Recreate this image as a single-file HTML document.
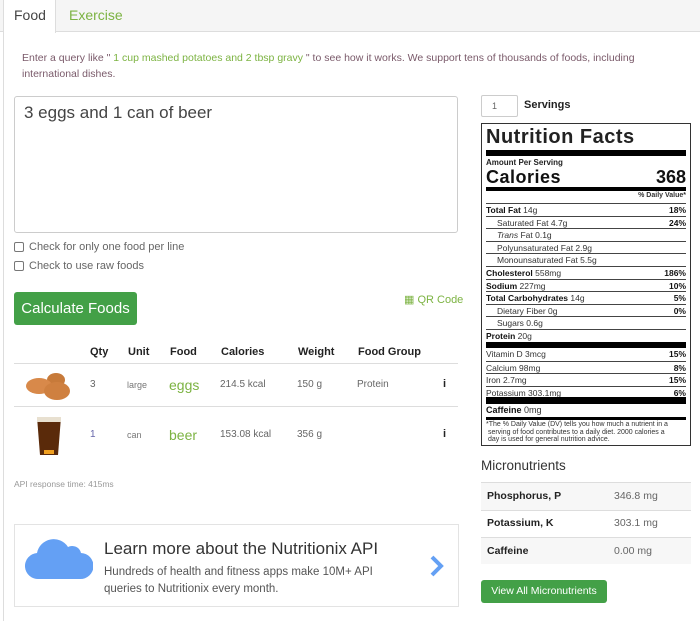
<!DOCTYPE html>
<html><head><meta charset="utf-8"><style>
*{box-sizing:border-box;margin:0;padding:0}
body{width:700px;height:621px;background:#fff;font-family:"Liberation Sans",sans-serif;color:#555;position:relative;overflow:hidden}
.a{position:absolute;white-space:nowrap}
.nf{position:absolute;left:481px;top:123px;width:210px;height:323px;border:1px solid #333;padding:0 4px}
.r{position:absolute;left:4px;right:4px;font-size:8.5px;color:#333;border-top:1px solid #444;height:12.6px;line-height:12px}
.r b{font-weight:900;color:#111}
.r .p{position:absolute;right:0;top:0;font-weight:900;color:#111}
.in{padding-left:11px}
.bar{position:absolute;left:4px;right:4px;background:#000}
th{font-size:11px;color:#222;text-align:left;font-weight:bold}
</style></head><body>
<div class="a" style="left:0;top:0;width:700px;height:32px;background:#f5f5f5;border-bottom:1px solid #ddd"></div>
<div class="a" style="left:3px;top:0;width:53px;height:33px;background:#fff;border-right:1px solid #ddd;border-left:1px solid #ddd"></div>
<div class="a" style="left:14px;top:7px;font-size:14px;color:#444">Food</div>
<div class="a" style="left:69px;top:7px;font-size:14px;color:#7cb342">Exercise</div>
<div class="a" style="left:3px;top:33px;width:1px;height:588px;background:#ddd"></div>
<div class="a" style="left:22px;top:50px;font-size:10.5px;color:#7a5a6a;line-height:16px;white-space:normal;width:640px">Enter a query like " <span style="color:#7cb342">1 cup mashed potatoes and 2 tbsp gravy</span> " to see how it works. We support tens of thousands of foods, including international dishes.</div>
<div class="a" style="left:14px;top:96px;width:444px;height:137px;border:1px solid #ccc;border-radius:3px"></div>
<div class="a" style="left:24px;top:103px;font-size:17px;color:#444">3 eggs and 1 can of beer</div>
<div class="a" style="left:14px;top:242px;width:10px;height:10px;border:1px solid #777;border-radius:2px"></div>
<div class="a" style="left:29px;top:241px;font-size:11px;color:#666">Check for only one food per line</div>
<div class="a" style="left:14px;top:261px;width:10px;height:10px;border:1px solid #777;border-radius:2px"></div>
<div class="a" style="left:29px;top:260px;font-size:11px;color:#666">Check to use raw foods</div>
<div class="a" style="left:14px;top:292px;width:123px;height:33px;background:#43a047;border-radius:3px;color:#fff;font-size:15px;line-height:33px;text-align:center">Calculate Foods</div>
<div class="a" style="left:404px;top:293px;font-size:11px;color:#7cb342">▦ QR Code</div>
<table class="a" style="left:14px;top:342px;width:444px;border-collapse:collapse">
<tr style="height:21px;border-bottom:1px solid #ddd"><th style="width:76px"></th><th style="width:38px">Qty</th><th style="width:42px">Unit</th><th style="width:51px">Food</th><th style="width:77px">Calories</th><th style="width:60px">Weight</th><th>Food Group</th><th></th></tr>
</table>
<div class="a" style="left:14px;top:406px;width:444px;height:1px;background:#ddd"></div>
<svg class="a" style="left:26px;top:371px" width="46" height="30"><ellipse cx="30" cy="9" rx="9" ry="7" fill="#c77a3a"/><ellipse cx="13" cy="15" rx="13" ry="8" fill="#d8894a"/><ellipse cx="31" cy="20" rx="13" ry="9" fill="#cf8040"/></svg>
<svg class="a" style="left:36px;top:416px" width="26" height="40"><path d="M1 1h24l-3 38H4z" fill="#5a2a0a"/><rect x="1" y="1" width="24" height="5" fill="#e8e0d0"/><rect x="8" y="34" width="10" height="4" fill="#f0a020"/></svg>
<div class="a" style="left:90px;top:379px;font-size:10px;color:#666">3</div>
<div class="a" style="left:127px;top:380px;font-size:9px;color:#777">large</div>
<div class="a" style="left:169px;top:377px;font-size:14px;color:#7cb342">eggs</div>
<div class="a" style="left:220px;top:379px;font-size:10px;color:#666">214.5 kcal</div>
<div class="a" style="left:297px;top:379px;font-size:10px;color:#666">150 g</div>
<div class="a" style="left:357px;top:379px;font-size:10px;color:#666">Protein</div>
<div class="a" style="left:443px;top:378px;font-size:11px;color:#222;font-weight:bold">i</div>
<div class="a" style="left:90px;top:429px;font-size:10px;color:#66a">1</div>
<div class="a" style="left:127px;top:430px;font-size:9px;color:#777">can</div>
<div class="a" style="left:169px;top:427px;font-size:14px;color:#7cb342">beer</div>
<div class="a" style="left:220px;top:429px;font-size:10px;color:#666">153.08 kcal</div>
<div class="a" style="left:297px;top:429px;font-size:10px;color:#666">356 g</div>
<div class="a" style="left:443px;top:428px;font-size:11px;color:#222;font-weight:bold">i</div>
<div class="a" style="left:14px;top:479px;font-size:8.5px;color:#999">API response time: 415ms</div>
<div class="a" style="left:14px;top:524px;width:445px;height:83px;border:1px solid #e3e3e3"></div>
<svg class="a" style="left:25px;top:538px" width="68" height="42"><path d="M14 41a13 13 0 0 1-2-26 17 17 0 0 1 31-6 9 9 0 0 1 13 6 13 13 0 0 1-1 26z" fill="#64a0f4"/></svg>
<div class="a" style="left:104px;top:539px;font-size:17px;color:#333">Learn more about the Nutritionix API</div>
<div class="a" style="left:104px;top:564px;font-size:11.5px;color:#555;line-height:17px">Hundreds of health and fitness apps make 10M+ API<br>queries to Nutritionix every month.</div>
<svg class="a" style="left:429px;top:555px" width="16" height="22"><path d="M3 2l9 9-9 9" fill="none" stroke="#64a0f4" stroke-width="4"/></svg>

<div class="a" style="left:481px;top:95px;width:37px;height:22px;border:1px solid #ccc;border-radius:2px;font-size:9px;color:#666;padding:5px 0 0 10px">1</div>
<div class="a" style="left:524px;top:99px;font-size:11px;color:#222;font-weight:bold">Servings</div>
<div class="nf">
<div class="a" style="left:4px;top:2px;font-size:20px;font-weight:900;color:#222;letter-spacing:.5px">Nutrition Facts</div>
<div class="bar" style="top:26px;height:6px"></div>
<div class="a" style="left:4px;top:34px;font-size:8px;font-weight:900;color:#222">Amount Per Serving</div>
<div class="a" style="left:4px;top:43px;font-size:18px;font-weight:900;color:#111;letter-spacing:.5px">Calories</div>
<div class="a" style="right:4px;top:43px;font-size:18px;font-weight:900;color:#111">368</div>
<div class="bar" style="top:63px;height:4px"></div>
<div class="a" style="right:4px;top:68px;font-size:7px;font-weight:bold;color:#333">% Daily Value*</div>
<div class="r" style="top:79px"><b>Total Fat</b> 14g<span class="p">18%</span></div>
<div class="r in" style="top:91.6px">Saturated Fat 4.7g<span class="p">24%</span></div>
<div class="r in" style="top:104.2px"><i>Trans</i> Fat 0.1g</div>
<div class="r in" style="top:116.8px">Polyunsaturated Fat 2.9g</div>
<div class="r in" style="top:129.4px">Monounsaturated Fat 5.5g</div>
<div class="r" style="top:142px"><b>Cholesterol</b> 558mg<span class="p">186%</span></div>
<div class="r" style="top:154.6px"><b>Sodium</b> 227mg<span class="p">10%</span></div>
<div class="r" style="top:167.2px"><b>Total Carbohydrates</b> 14g<span class="p">5%</span></div>
<div class="r in" style="top:179.8px">Dietary Fiber 0g<span class="p">0%</span></div>
<div class="r in" style="top:192.4px">Sugars 0.6g</div>
<div class="r" style="top:205px"><b>Protein</b> 20g</div>
<div class="bar" style="top:218px;height:6px"></div>
<div class="r" style="top:224px;border-top:0">Vitamin D 3mcg<span class="p">15%</span></div>
<div class="r" style="top:236.6px">Calcium 98mg<span class="p">8%</span></div>
<div class="r" style="top:249.2px">Iron 2.7mg<span class="p">15%</span></div>
<div class="r" style="top:261.8px">Potassium 303.1mg<span class="p">6%</span></div>
<div class="bar" style="top:273px;height:7px"></div>
<div class="r" style="top:280px;border-top:0;font-size:9px"><b>Caffeine</b> 0mg</div>
<div class="bar" style="top:293px;height:3px"></div>
<div class="a" style="left:4px;top:297px;font-size:7px;color:#333;line-height:7.5px">*The % Daily Value (DV) tells you how much a nutrient in a<br>&nbsp;serving of food contributes to a daily diet. 2000 calories a<br>&nbsp;day is used for general nutrition advice.</div>
</div>
<div class="a" style="left:481px;top:458px;font-size:13.5px;color:#333">Micronutrients</div>
<div class="a" style="left:481px;top:482px;width:210px;height:28px;background:#f7f7f7;border-top:1px solid #ddd"></div>
<div class="a" style="left:481px;top:510px;width:210px;height:27px;border-top:1px solid #ddd"></div>
<div class="a" style="left:481px;top:537px;width:210px;height:27px;background:#f7f7f7;border-top:1px solid #ddd"></div>
<div class="a" style="left:487px;top:490px;font-size:10.5px;font-weight:bold;color:#222">Phosphorus, P</div>
<div class="a" style="left:614px;top:490px;font-size:10.5px;color:#666">346.8 mg</div>
<div class="a" style="left:487px;top:517px;font-size:10.5px;font-weight:bold;color:#222">Potassium, K</div>
<div class="a" style="left:614px;top:517px;font-size:10.5px;color:#666">303.1 mg</div>
<div class="a" style="left:487px;top:545px;font-size:10.5px;font-weight:bold;color:#222">Caffeine</div>
<div class="a" style="left:614px;top:545px;font-size:10.5px;color:#666">0.00 mg</div>
<div class="a" style="left:481px;top:580px;width:126px;height:23px;background:#43a047;border-radius:3px;color:#fff;font-size:10.5px;line-height:23px;text-align:center">View All Micronutrients</div>
</body></html>
